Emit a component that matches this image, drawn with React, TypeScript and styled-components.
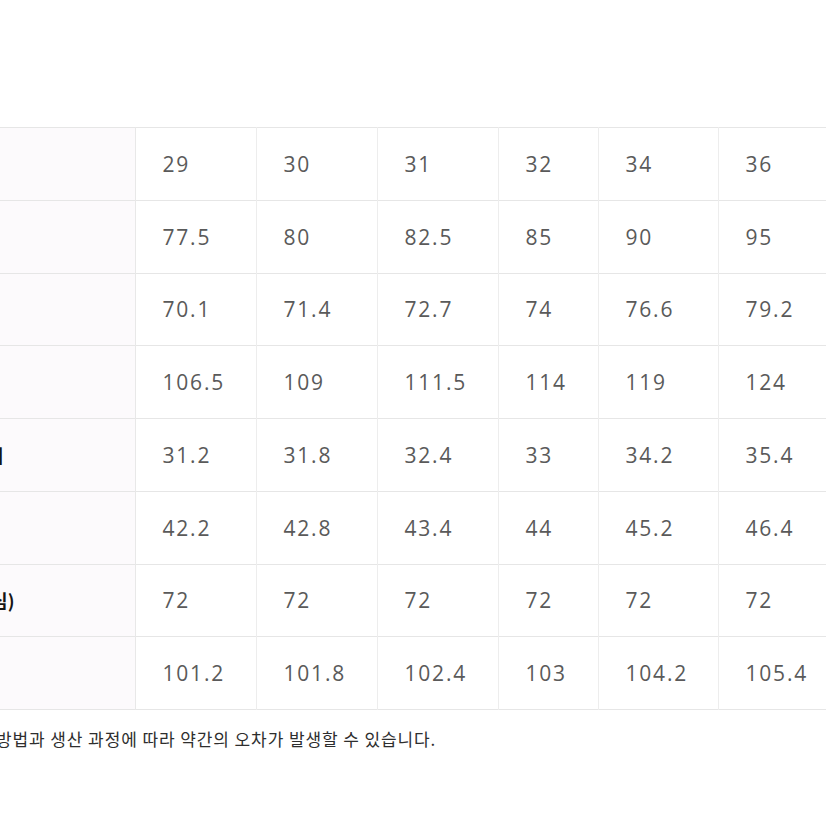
import React from 'react';
import styled, { createGlobalStyle } from 'styled-components';

const GlobalStyle = createGlobalStyle`
  html, body {
    margin: 0;
    padding: 0;
    background: #FFFFFF;
  }
  body {
    font-family: "Open Sans", "Noto Sans", "Noto Sans CJK KR", sans-serif;
  }
`;

const Page = styled.div`
  width: 826px;
  height: 826px;
  overflow: hidden;
  padding-top: 127px;
  box-sizing: border-box;
`;

const SizeTable = styled.table`
  margin-left: -200px;
  border-collapse: collapse;
  table-layout: fixed;
  width: 1038px;
  border-top: 1px solid #E6E6E6;
`;

const Row = styled.tr`
  height: 72.75px;
  border-bottom: 1px solid #E6E6E6;
`;

interface LabelCellProps {
  $tail: number;
}

const LabelCell = styled.td<LabelCellProps>`
  width: 335px;
  box-sizing: border-box;
  background: #FCFAFC;
  border-right: 1px solid #E8E8E8;
  text-align: right;
  padding: 0 ${(props: LabelCellProps) => props.$tail}px 0 0;
  font-family: "Noto Sans CJK KR", "Noto Sans", sans-serif;
  font-weight: 700;
  font-size: 18px;
  color: #151515;
  white-space: nowrap;
`;

interface ValueCellProps {
  $width: number;
}

const ValueCell = styled.td<ValueCellProps>`
  width: ${(props: ValueCellProps) => props.$width}px;
  box-sizing: border-box;
  padding: 0 0 0 27px;
  border-right: 1px solid #EDEDED;
  font-size: 21px;
  letter-spacing: 1.8px;
  color: #5A5A5A;
  vertical-align: middle;
`;

const Note = styled.p`
  margin: 16px 0 0 -4px;
  font-family: "Noto Sans CJK KR", "Noto Sans", sans-serif;
  font-size: 17px;
  letter-spacing: 0.9px;
  line-height: 26px;
  color: #2E2E2E;
  white-space: nowrap;
`;

const widths = [121, 121, 121, 100, 120, 120];

const rows = [
  { label: '사이즈', tail: 160, values: ['29', '30', '31', '32', '34', '36'] },
  { label: '허리', tail: 160, values: ['77.5', '80', '82.5', '85', '90', '95'] },
  { label: '엉덩이', tail: 150, values: ['70.1', '71.4', '72.7', '74', '76.6', '79.2'] },
  { label: '허벅지', tail: 160, values: ['106.5', '109', '111.5', '114', '119', '124'] },
  { label: '밑위', tail: 131, values: ['31.2', '31.8', '32.4', '33', '34.2', '35.4'] },
  { label: '밑단', tail: 160, values: ['42.2', '42.8', '43.4', '44', '45.2', '46.4'] },
  { label: '기장(인심)', tail: 120, values: ['72', '72', '72', '72', '72', '72'] },
  { label: '총장', tail: 160, values: ['101.2', '101.8', '102.4', '103', '104.2', '105.4'] },
];

export default function App() {
  return (
    <Page>
      <GlobalStyle />
      <SizeTable>
        <tbody>
          {rows.map((row) => (
            <Row key={row.label}>
              <LabelCell $tail={row.tail}>{row.label}</LabelCell>
              {row.values.map((v, i) => (
                <ValueCell key={i} $width={widths[i]}>{v}</ValueCell>
              ))}
            </Row>
          ))}
        </tbody>
      </SizeTable>
      <Note>방법과 생산 과정에 따라 약간의 오차가 발생할 수 있습니다.</Note>
    </Page>
  );
}
